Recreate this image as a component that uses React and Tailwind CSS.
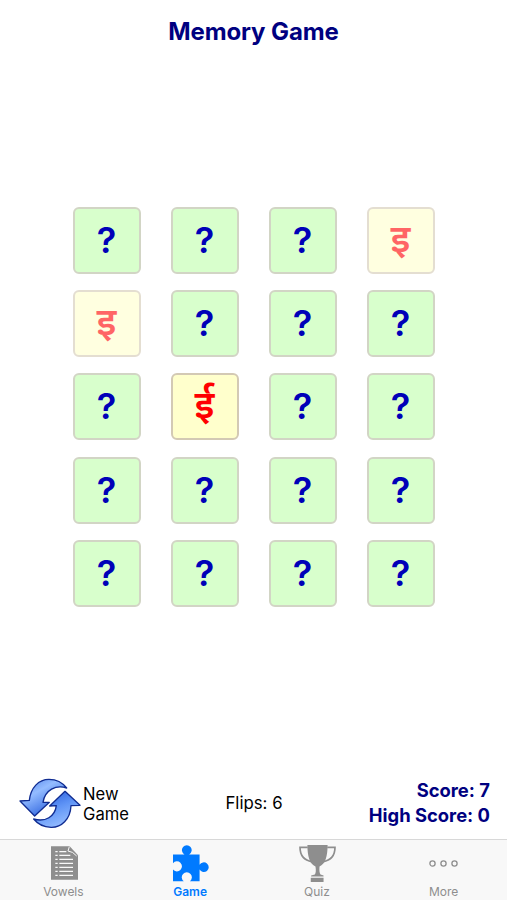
import React from 'react';

const CARDS = [
    '?', '?', '?', 'इ',
    'इ', '?', '?', '?',
    '?', 'ई', '?', '?',
    '?', '?', '?', '?',
    '?', '?', '?', '?',
];

const Card = ({ value }) => {
    if (value === '?') {
        return (
            <button type="button" className="h-[67px] w-[68px] rounded-md border-2 border-[#d2d5c5] bg-[#d8ffcc] pb-px text-[36px] leading-none font-semibold text-[#0000b8]">
                {value}
            </button>
        );
    }
    // matched cards are faded, the open one is not
    const matched = value === 'इ';
    return (
        <button
            type="button"
            className={`h-[67px] w-[68px] rounded-md border-2 border-[#d3c9b4] bg-[#ffffcc] pb-[8px] text-[39px] leading-none font-semibold text-[#ff0000] font-['Noto_Sans','Noto_Sans_Devanagari',sans-serif] ${matched ? 'opacity-60' : ''}`}
        >
            {value}
        </button>
    );
};

const RefreshArrows = () => (
    <svg viewBox="54 24 189 153" className="h-[51px] w-[63px]">
        <defs>
            <linearGradient id="arrowDown" x1="0" y1="0" x2="0.7" y2="1">
                <stop offset="0" stopColor="#4a7eea" />
                <stop offset="0.4" stopColor="#94bcff" />
                <stop offset="1" stopColor="#2058da" />
            </linearGradient>
            <linearGradient id="arrowUp" x1="0" y1="0" x2="0.5" y2="1">
                <stop offset="0" stopColor="#1c4fd4" />
                <stop offset="0.55" stopColor="#5f94f6" />
                <stop offset="1" stopColor="#94bcff" />
            </linearGradient>
        </defs>
        <g stroke="#102c91" strokeWidth="4" strokeLinejoin="round">
            <path fill="url(#arrowDown)" d="M60 93 L88 91 C92 53 116 28 147 28 C170 28 187 37 200 54 C168 43 135 60 129 97 L148 97 L104 138 Z" />
            <path fill="url(#arrowUp)" d="M195 64 L240 106 L213 107 C211 148 184 173 153 172 C131 171 113 162 101 147 C136 157 165 140 169 107 L149 108 Z" />
        </g>
    </svg>
);

const DocumentIcon = () => (
    <svg viewBox="66 35 81 100" className="mt-px ml-[3px] h-[34px] w-[27px]">
        <path fill="#8e8e8e" d="M66 35 H122 L147 62 V135 H66 Z" />
        <path fill="none" stroke="#f8f8f8" strokeWidth="3" d="M121 36 L117 49 Q131 50 143 64" />
        <path
            stroke="#f8f8f8"
            strokeWidth="3.5"
            d="M79 51h7M79 62h7M79 74h7M79 86h7M79 98h7M79 110h7M79 122h7M91 51h21M91 62h33M91 74h41M91 86h41M91 98h41M91 110h41M91 122h41"
        />
    </svg>
);

const PuzzleIcon = () => (
    <svg viewBox="426 30 110 110" className="h-[37px] w-[37px]">
        <path
            fill="#007aff"
            d="M429 58 H463 A14.5 14.5 0 1 1 477 58 H508 V89 A14.5 14.5 0 1 1 508 103 V138 H479 A15 15 0 1 0 461 138 H429 V103 A15 15 0 1 0 429 84 Z"
        />
    </svg>
);

const TrophyIcon = () => (
    <svg viewBox="58 30 110 110" className="ml-px h-[37px] w-[37px]">
        <path fill="#8e8e8e" d="M83 30 H143 C143 65 136 86 119 94 C118 105 119 114 122 118 L131 121 V124 H94 V121 L105 118 C108 114 109 105 107 94 C90 86 83 65 83 30 Z M93 127 H131 V140 H93 Z" />
        <path fill="none" stroke="#8e8e8e" strokeWidth="5" d="M84 37 H61 C61 60 73 76 97 80 M142 37 H165 C165 60 153 76 129 80" />
    </svg>
);

const MoreIcon = () => (
    <svg viewBox="0 0 30 37" className="h-[37px] w-[30px]" fill="none" stroke="#8e8e8e" strokeWidth="1.3">
        <circle cx="3.5" cy="18.5" r="2.6" />
        <circle cx="14.5" cy="18.5" r="2.6" />
        <circle cx="25.5" cy="18.5" r="2.6" />
    </svg>
);

const TABS = [
    { label: 'Vowels', Icon: DocumentIcon },
    { label: 'Game', Icon: PuzzleIcon, active: true },
    { label: 'Quiz', Icon: TrophyIcon },
    { label: 'More', Icon: MoreIcon },
];

export default function App() {
    return (
        <div className="flex h-[900px] w-[507px] flex-col overflow-hidden bg-white font-[Inter,sans-serif]">
            <h1 className="pt-[16px] text-center text-[24px] leading-8 font-bold tracking-[-0.1px] text-[#000080]">Memory Game</h1>

            <main className="flex-1 pt-[159px]">
                <div className="grid grid-cols-[repeat(4,68px)] justify-center gap-x-[30px] gap-y-[16.2px]">
                    {CARDS.map((value, index) => (
                        <Card key={index} value={value} />
                    ))}
                </div>
            </main>

            <div className="flex h-[61px] items-start justify-between pr-[17px] pl-[18px]">
                <button type="button" className="flex w-[160px] items-start text-left text-[16.6px] leading-5 text-black">
                    <RefreshArrows />
                    <span className="w-[60px] pt-[6px] pl-[2px]">New Game</span>
                </button>
                <p className="pt-[13px] text-[16.8px] leading-6 text-black">Flips: 6</p>
                <div className="w-[160px] text-right text-[18.4px] leading-[25px] font-bold text-[#000080]">
                    <p>Score: 7</p>
                    <p>High Score: 0</p>
                </div>
            </div>

            <nav className="grid h-[61px] grid-cols-4 border-t border-[#d8d8d8] bg-[#f8f8f8]">
                {TABS.map(({ label, Icon, active }) => (
                    <button key={label} type="button" className={`flex flex-col items-center pt-[5px] text-[12px] leading-[14px] ${active ? 'font-semibold text-[#007aff]' : 'text-[#8e8e8e]'}`}>
                        <span className="flex h-[40px] items-start justify-center">
                            <Icon />
                        </span>
                        {label}
                    </button>
                ))}
            </nav>
        </div>
    );
}
